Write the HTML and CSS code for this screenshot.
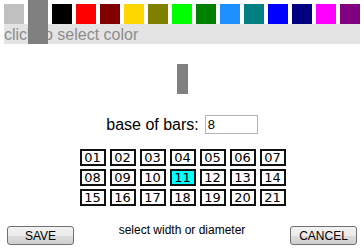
FILE: index.html
```html
<!DOCTYPE html>
<html lang="en">
<head>
    <meta charset="UTF-8">
    <meta name="viewport" content="width=device-width, initial-scale=1.0">
    <title>Bars</title>
    <link rel="stylesheet" href="styles.css">
</head>
<body>
    <div class="palette">
        <span class="swatch" style="background:#c0c0c0"></span>
        <span class="swatch selected" style="background:#808080"></span>
        <span class="swatch" style="background:#000000"></span>
        <span class="swatch" style="background:#ff0000"></span>
        <span class="swatch" style="background:#800000"></span>
        <span class="swatch" style="background:#ffd700"></span>
        <span class="swatch" style="background:#808000"></span>
        <span class="swatch" style="background:#00ff00"></span>
        <span class="swatch" style="background:#008000"></span>
        <span class="swatch" style="background:#1e90ff"></span>
        <span class="swatch" style="background:#008080"></span>
        <span class="swatch" style="background:#0000ff"></span>
        <span class="swatch" style="background:#000080"></span>
        <span class="swatch" style="background:#ff00ff"></span>
        <span class="swatch" style="background:#800080"></span>
    </div>
    <div class="hint">click to select color</div>

    <div class="preview"></div>

    <div class="base-row">
        <label for="base">base of bars:</label>
        <input type="text" id="base" value="8">
    </div>

    <div class="sizes">
        <span class="cell">01</span><span class="cell">02</span><span class="cell">03</span><span class="cell">04</span><span class="cell">05</span><span class="cell">06</span><span class="cell">07</span>
        <span class="cell">08</span><span class="cell">09</span><span class="cell">10</span><span class="cell active">11</span><span class="cell">12</span><span class="cell">13</span><span class="cell">14</span>
        <span class="cell">15</span><span class="cell">16</span><span class="cell">17</span><span class="cell">18</span><span class="cell">19</span><span class="cell">20</span><span class="cell">21</span>
    </div>

    <div class="footer">
        <button class="btn">SAVE</button>
        <span class="note">select width or diameter</span>
        <button class="btn">CANCEL</button>
    </div>
</body>
</html>
```

FILE: styles.css
```css
body {
    margin: 0;
    width: 364px;
    height: 248px;
    overflow: hidden;
    background: #fff;
    font-family: 'Liberation Sans', Arial, sans-serif;
    color: #000;
}
.palette {
    display: flex;
    gap: 4px;
    padding: 4px 4px 0 4px;
    height: 20px;
}
.swatch {
    display: block;
    width: 20px;
    height: 20px;
    flex: none;
}
.swatch.selected {
    position: relative;
    z-index: 1;
    margin-top: -4px;
    height: 44px;
}
.hint {
    margin: 0 4px;
    height: 20px;
    background: #e4e4e4;
    color: #8c8c8c;
    font-size: 16px;
    line-height: 21px;
    white-space: nowrap;
    overflow: hidden;
}
.preview {
    width: 11px;
    height: 30px;
    margin: 20px auto 0 auto;
    background: #808080;
}
.base-row {
    display: flex;
    justify-content: center;
    align-items: center;
    gap: 6px;
    margin-top: 21px;
    height: 19px;
}
.base-row label {
    font-size: 16px;
}
.base-row input {
    width: 53px;
    height: 19px;
    box-sizing: border-box;
    border: 1px solid #b4b4b4;
    padding: 0 2px;
    font-family: 'Liberation Sans', Arial, sans-serif;
    font-size: 13px;
    margin: 0;
}
.sizes {
    display: grid;
    grid-template-columns: repeat(7, 26px);
    grid-auto-rows: 17px;
    column-gap: 4px;
    row-gap: 3px;
    justify-content: center;
    margin-top: 15px;
    padding-left: 1px;
}
.cell {
    box-sizing: border-box;
    border: 2px solid #111;
    background: #fff;
    font-family: 'DejaVu Sans', Verdana, sans-serif;
    font-size: 13px;
    line-height: 13px;
    text-align: center;
}
.cell.active {
    background: #00ffff;
}
.footer {
    display: flex;
    justify-content: space-between;
    align-items: flex-start;
    padding: 0 7px;
    margin-top: 20px;
}
.btn {
    width: 67px;
    height: 19px;
    padding: 0;
    border: 1px solid #707070;
    border-radius: 3px;
    background: linear-gradient(#f2f2f2, #ebebeb 50%, #dddddd 50%, #cfcfcf);
    font-family: 'Liberation Sans', Arial, sans-serif;
    font-size: 12px;
    color: #000;
}
.note {
    font-size: 12px;
    line-height: 14px;
    margin-top: -3px;
}
```
